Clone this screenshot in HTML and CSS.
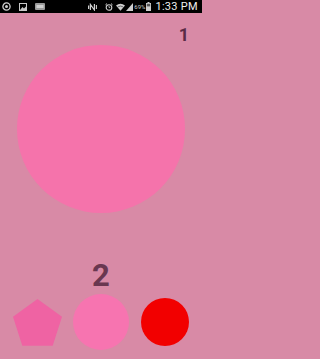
FILE: index.html
```html
<!DOCTYPE html>
<html>
<head>
<meta charset="utf-8">
<link rel="stylesheet" href="styles.css">
</head>
<body>
<div class="screen">
  <div class="statusbar">
    <div class="sb-left">
      <svg class="ic" width="9" height="9" viewBox="0 0 9 9"><circle cx="4.5" cy="4.5" r="3.6" fill="none" stroke="#d0d0d0" stroke-width="1.3"/><circle cx="4.5" cy="4.5" r="1.5" fill="#d0d0d0"/></svg>
      <svg class="ic" width="8" height="8" viewBox="0 0 8 8"><rect x="0.5" y="0.5" width="7" height="7" fill="none" stroke="#c8c8c8"/><path d="M1 7 L3.5 4 L5 5.5 L7 3.5 L7 7 Z" fill="#c8c8c8"/></svg>
      <svg class="ic" width="10" height="7" viewBox="0 0 10 7"><rect x="0" y="0" width="10" height="7" rx="1" fill="#9a9a9a"/><rect x="1.5" y="2" width="7" height="3" fill="#cfcfcf"/></svg>
    </div>
    <div class="sb-right">
      <svg class="i-mute" width="10" height="8" viewBox="0 0 10 8"><path d="M0.6 6 V2.5 M2.4 7 V1.5 L6.4 7 V1" fill="none" stroke="#cfcfcf" stroke-width="1.2"/><path d="M8.4 2 V6" stroke="#cfcfcf" stroke-width="1.1"/></svg>
      <svg class="i-alarm" width="8" height="8" viewBox="0 0 8 8"><circle cx="4" cy="4.5" r="2.8" fill="none" stroke="#cfcfcf" stroke-width="1.1"/><path d="M4 3 V4.6 H5.2" fill="none" stroke="#cfcfcf" stroke-width="0.8"/><path d="M0.5 1.8 L2 0.6 M7.5 1.8 L6 0.6" stroke="#cfcfcf"/></svg>
      <svg class="i-wifi" width="9" height="8" viewBox="0 0 9 8"><path d="M0 2.5 Q4.5 -0.8 9 2.5 L4.5 7.8 Z" fill="#cfcfcf"/><path d="M1.8 3.9 Q4.5 2.2 7.2 3.9" fill="none" stroke="#000" stroke-width="0.5"/></svg>
      <svg class="i-signal" width="7" height="8" viewBox="0 0 7 8"><path d="M0 8 L7 0 V8 Z" fill="#cfcfcf"/></svg>
      <span class="pct">69%</span>
      <svg class="i-batt" width="5" height="9" viewBox="0 0 5 9"><rect x="1.5" y="0" width="2" height="1" fill="#cfcfcf"/><rect x="0" y="1" width="5" height="8" fill="#cfcfcf"/><rect x="0.8" y="1.8" width="3.4" height="2.6" fill="#555"/></svg>
      <span class="time">1:33 PM</span>
    </div>
  </div>
  <main class="app">
    <div class="score score-top">1</div>
    <div class="big-circle"></div>
    <div class="score score-mid">2</div>
    <div class="shapes">
      <svg class="pentagon" width="49" height="47" viewBox="0 0 49 47"><polygon points="24.5,0 49,17.8 39.7,46.7 9.3,46.7 0,17.8" fill="#ef63a3"/></svg>
      <div class="mid-circle"></div>
      <div class="red-circle"></div>
    </div>
  </main>
</div>
</body>
</html>
```

FILE: styles.css
```css
html, body {
  margin: 0;
  padding: 0;
}
body {
  width: 202px;
  height: 359px;
  overflow: hidden;
  font-family: Roboto, "Liberation Sans", sans-serif;
  background: #d88aa6;
}
.screen {
  width: 202px;
  height: 359px;
  display: flex;
  flex-direction: column;
}
.statusbar {
  height: 13px;
  background: #000;
  display: flex;
  align-items: center;
  justify-content: space-between;
  flex-shrink: 0;
}
.sb-left {
  display: flex;
  align-items: center;
  gap: 8px;
  padding-left: 2px;
}
.sb-left .ic { display: block; }
.sb-right {
  display: flex;
  align-items: center;
  padding-right: 4px;
}
.sb-right svg { display: block; }
.i-alarm { margin-left: 7px; }
.i-wifi { margin-left: 3px; }
.i-signal { margin-left: 1px; }
.pct {
  font-size: 6px;
  line-height: 8px;
  color: #cfcfcf;
  margin-left: 1px;
}
.i-batt { margin-left: 1px; }
.time {
  font-size: 11px;
  line-height: 13px;
  letter-spacing: 0.3px;
  margin-left: 4px;
  color: #ededed;
}
.app {
  flex: 1;
  display: flex;
  flex-direction: column;
  padding-top: 13px;
}
.score {
  font-weight: 700;
}
.score-top {
  font-size: 18px;
  line-height: 18px;
  text-align: right;
  padding-right: 13px;
  color: #5a2b46;
}
.big-circle {
  width: 168px;
  height: 168px;
  border-radius: 50%;
  background: #f573ab;
  margin: 1px 0 0 17px;
}
.score-mid {
  font-size: 31px;
  line-height: 31px;
  text-align: center;
  margin-top: 47px;
  color: #693750;
}
.shapes {
  display: flex;
  align-items: center;
  padding-left: 13px;
  margin-top: 3px;
}
.pentagon { display: block; }
.mid-circle {
  width: 56px;
  height: 56px;
  border-radius: 50%;
  background: #f774b0;
  margin-left: 11px;
}
.red-circle {
  width: 48px;
  height: 48px;
  border-radius: 50%;
  background: #f20000;
  margin-left: 12px;
}
```
